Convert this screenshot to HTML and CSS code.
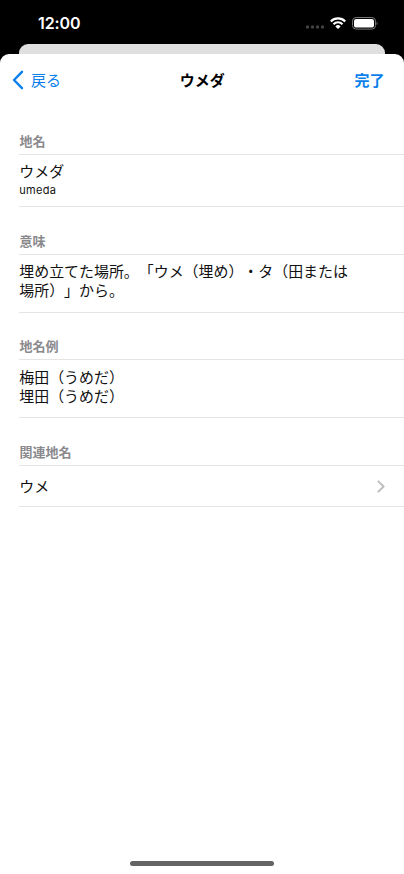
FILE: index.html
```html
<!DOCTYPE html>
<html lang="ja">
<head>
<meta charset="utf-8">
<meta name="viewport" content="width=device-width, initial-scale=1">
<title>ウメダ</title>
<link rel="stylesheet" href="styles.css">
</head>
<body>
<div class="status">
  <span class="clock">12:00</span>
  <div class="indicators">
    <svg class="cell" width="19" height="4" viewBox="0 0 19 4"><g fill="#444"><rect x="0" y=".5" width="3" height="3" rx=".8"/><rect x="5" y=".5" width="3" height="3" rx=".8"/><rect x="10" y=".5" width="3" height="3" rx=".8"/><rect x="15" y=".5" width="3" height="3" rx=".8"/></g></svg>
    <svg class="wifi" width="16" height="12" viewBox="0 0 16 12"><g fill="none" stroke="#fff" stroke-width="2.1"><path d="M.8 4.4a10.2 10.2 0 0 1 14.4 0"/><path d="M3.5 7.2a6.3 6.3 0 0 1 9 0"/></g><path d="M8 12L5.4 9.4a3.7 3.7 0 0 1 5.2 0z" fill="#fff"/></svg>
    <svg class="battery" width="26" height="13" viewBox="0 0 26 13"><rect x=".5" y=".5" width="23" height="11.6" rx="3.6" fill="none" stroke="#777"/><rect x="2" y="2" width="20" height="8.6" rx="2.2" fill="#fff"/><path d="M24.6 4.4c1.3.6 1.3 3.2 0 3.8z" fill="#777"/></svg>
  </div>
</div>
<div class="backdrop"></div>
<main class="sheet">
  <header class="nav">
    <a class="back"><svg width="12" height="20" viewBox="0 0 12 20"><path d="M10 1.8L2 10l8 8.2" fill="none" stroke="currentColor" stroke-width="2.4" stroke-linecap="round" stroke-linejoin="round"/></svg><span>戻る</span></a>
    <h1>ウメダ</h1>
    <a class="done">完了</a>
  </header>
  <section class="name">
    <h2>地名</h2>
    <div class="row"><p>ウメダ</p><p class="reading">umeda</p></div>
  </section>
  <section class="meaning">
    <h2>意味</h2>
    <div class="row"><p>埋め立てた場所。「ウメ（埋め）・タ（田または<br>場所）」から。</p></div>
  </section>
  <section class="examples">
    <h2>地名例</h2>
    <div class="row"><p>梅田（うめだ）<br>埋田（うめだ）</p></div>
  </section>
  <section class="related">
    <h2>関連地名</h2>
    <div class="row link"><p>ウメ</p><svg width="8" height="13" viewBox="0 0 8 13"><path d="M1.4 1.3L6.6 6.5l-5.2 5.2" fill="none" stroke="#bdbdc0" stroke-width="1.9" stroke-linecap="round" stroke-linejoin="round"/></svg></div>
  </section>
  <div class="home"></div>
</main>
</body>
</html>
```
FILE: styles.css
```css
* { box-sizing: border-box; }
body {
  margin: 0;
  height: 874px;
  display: flex;
  flex-direction: column;
  overflow: hidden;
  background: #000;
  color: #111;
  font-family: Inter, "Noto Sans CJK JP", sans-serif;
  text-spacing-trim: space-all;
}
svg { display: block; flex: none; }
h1, h2, p { margin: 0; }
.status {
  flex: none;
  height: 44px;
  padding: 2px 26px 0 38px;
  display: flex;
  align-items: center;
  justify-content: space-between;
}
.clock {
  color: #fff;
  font-size: 16px;
  font-weight: 600;
  line-height: 20px;
  letter-spacing: -.1px;
}
.indicators { display: flex; align-items: center; }
.cell { margin-top: 8px; }
.wifi { margin-left: 5px; }
.battery { margin-left: 6px; }
.backdrop {
  flex: none;
  height: 10px;
  margin: 0 19px;
  border-radius: 9px 9px 0 0;
  background: #e0e0e0;
}
.sheet {
  flex: 1;
  display: flex;
  flex-direction: column;
  border-radius: 9px 9px 0 0;
  background: #fff;
}
.nav {
  height: 53px;
  padding: 0 19.5px 1px 12px;
  display: grid;
  grid-template-columns: 1fr auto 1fr;
  align-items: center;
  font-size: 15px;
  line-height: 20px;
}
.nav h1 { font-size: 15px; font-weight: 700; color: #000; margin-right: -8px; padding-top: 2px; }
.back, .done { color: #0a7fec; }
.back { display: flex; align-items: center; gap: 7px; }
.back span { padding-top: 2px; }
.done { justify-self: end; font-weight: 700; padding-top: 2px; }
section { display: flex; flex-direction: column; padding-left: 19px; }
h2 {
  flex: 1;
  padding: 0 0 3px .5px;
  display: flex;
  align-items: flex-end;
  color: #8a8a8d;
  font-size: 13px;
  font-weight: 700;
  line-height: 20px;
}
.row {
  border-top: 1px solid #e4e4e5;
  border-bottom: 1px solid #e4e4e5;
  padding: 8px 0 0 .3px;
  font-size: 14.95px;
  line-height: 19px;
}
.name { height: 100px; }
.name .row { height: 53px; }
.reading { font-size: 11px; line-height: 16px; letter-spacing: .3px; }
.meaning { height: 106px; }
.meaning .row { height: 59px; }
.examples { height: 105px; }
.examples .row { height: 59px; padding-top: 9px; }
.related { height: 89px; }
.related .row { height: 42px; }
.related .link {
  padding: 0 19px 0 .3px;
  display: flex;
  align-items: center;
  justify-content: space-between;
}
.link p { padding-top: 2px; }
.home {
  width: 144px;
  height: 5px;
  margin: auto auto 8px;
  border-radius: 3px;
  background: #646464;
}
```
